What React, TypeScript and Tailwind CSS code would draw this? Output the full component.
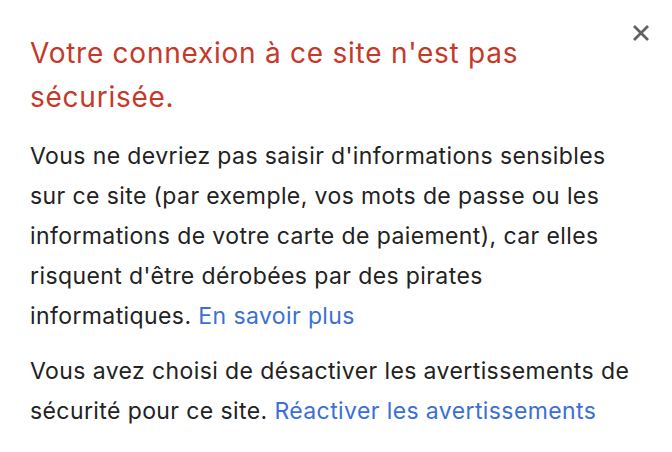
import React from "react";

export default function App() {
  return (
    <div className="w-[672px] h-[452px] bg-white relative" style={{ fontFamily: "Inter, 'Noto Sans', sans-serif" }}>
      <button className="absolute left-[631px] top-[23px] w-[20px] h-[20px] flex items-center justify-center">
        <svg width="18" height="18" viewBox="0 0 18 18">
          <path d="M2 2 L16 16 M16 2 L2 16" stroke="#5f6368" strokeWidth="2.8" strokeLinecap="butt" />
        </svg>
      </button>
      <div className="pl-[30px] pr-[32px] pt-[31px]">
        <h1 className="text-[28px] leading-[44px] tracking-[0.75px] text-[#c53929] font-normal w-[580px]">
          Votre connexion à ce site n'est pas sécurisée.
        </h1>
        <p className="mt-[17px] text-[23px] leading-[40px] tracking-[0.4px] text-[#222222]">
          Vous ne devriez pas saisir d'informations sensibles sur ce site (par exemple, vos mots de passe ou les informations de votre carte de paiement), car elles risquent d'être dérobées par des pirates informatiques.{" "}
          <a className="text-[#3b6fd6]">En savoir plus</a>
        </p>
        <p className="mt-[15px] text-[23px] leading-[40px] tracking-[0.4px] text-[#222222]">
          Vous avez choisi de désactiver les avertissements de sécurité pour ce site.{" "}
          <a className="text-[#3b6fd6]">Réactiver les avertissements</a>
        </p>
      </div>
    </div>
  );
}
